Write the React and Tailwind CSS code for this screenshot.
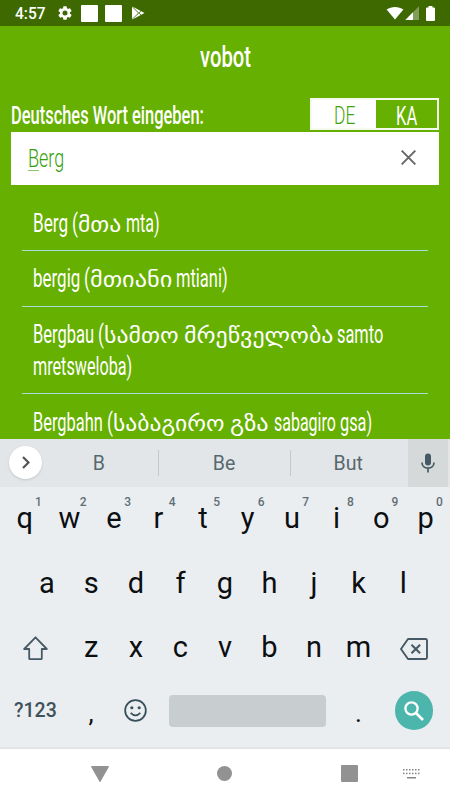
import { useLayoutEffect, useRef, useState } from "react";

const suggestions = [
  {
    height: "h-[56px]",
    lines: [
      [
        { text: "Berg", width: 35 },
        { text: "(", width: 6, gap: 4 },
        { text: "მთა", width: 43, geo: true },
        { text: "mta)", width: 34, gap: 5 },
      ],
    ],
  },
  {
    height: "h-[56px]",
    lines: [
      [
        { text: "bergig", width: 47 },
        { text: "(", width: 6, gap: 4 },
        { text: "მთიანი", width: 82, geo: true },
        { text: "mtiani)", width: 52, gap: 4 },
      ],
    ],
  },
  {
    height: "h-[87px]",
    lines: [
      [
        { text: "Bergbau", width: 61 },
        { text: "(", width: 6, gap: 4 },
        { text: "სამთო", width: 75, geo: true },
        { text: "მრეწველობა", width: 149, gap: 5, geo: true },
        { text: "samto", width: 46, gap: 4 },
      ],
      [{ text: "mretsweloba)", width: 99 }],
    ],
  },
  {
    height: "h-[56px]",
    lines: [
      [
        { text: "Bergbahn", width: 70 },
        { text: "(", width: 6, gap: 4 },
        { text: "საბაგირო", width: 112, geo: true },
        { text: "გზა", width: 39, gap: 5, geo: true },
        { text: "sabagiro", width: 62, gap: 5 },
        { text: "gsa)", width: 32, gap: 4 },
      ],
    ],
  },
];

const topRow = ["q", "w", "e", "r", "t", "y", "u", "i", "o", "p"];
const homeRow = ["a", "s", "d", "f", "g", "h", "j", "k", "l"];
const lowerRow = ["z", "x", "c", "v", "b", "n", "m"];

// Condenses a word horizontally so that it fills the given width
function Fit({ width, gap = 0, className = "", children }) {
  const ref = useRef(null);
  const [scale, setScale] = useState(1);

  useLayoutEffect(() => {
    setScale(width / ref.current.offsetWidth);
  }, [width]);

  return (
    <span className="block shrink-0" style={{ width, marginLeft: gap }}>
      <span
        ref={ref}
        className={"inline-block origin-left whitespace-nowrap " + className}
        style={{ transform: `scaleX(${scale})` }}
      >
        {children}
      </span>
    </span>
  );
}

function StatusBar() {
  return (
    <div className="h-[26px] shrink-0 bg-[#3d6900] flex items-center justify-between pl-[15px] pr-[15px] text-white">
      <div className="flex items-center">
        <Fit width={31} className="text-[16px] leading-[26px] font-medium pt-px">4:57</Fit>
        <svg viewBox="2 2 20 20" className="ml-[12px] w-[14px] h-[14px]" fill="currentColor">
          <path d="M19.14 12.94c.04-.3.06-.61.06-.94 0-.32-.02-.64-.07-.94l2.03-1.58a.49.49 0 0 0 .12-.61l-1.92-3.32a.49.49 0 0 0-.59-.22l-2.39.96c-.5-.38-1.03-.7-1.62-.94l-.36-2.54a.48.48 0 0 0-.48-.41h-3.84c-.24 0-.43.17-.47.41l-.36 2.54c-.59.24-1.13.57-1.62.94l-2.39-.96a.48.48 0 0 0-.59.22L2.74 8.87c-.12.21-.08.47.12.61l2.03 1.58c-.05.3-.09.63-.09.94s.02.64.07.94l-2.03 1.58a.49.49 0 0 0-.12.61l1.92 3.32c.12.22.37.29.59.22l2.39-.96c.5.38 1.03.7 1.62.94l.36 2.54c.05.24.24.41.48.41h3.84c.24 0 .44-.17.47-.41l.36-2.54c.59-.24 1.13-.56 1.62-.94l2.39.96c.22.08.47 0 .59-.22l1.92-3.32a.49.49 0 0 0-.12-.61zM12 15.6A3.6 3.6 0 1 1 12 8.4a3.6 3.6 0 0 1 0 7.2z" />
        </svg>
        <span className="ml-[9px] w-[17px] h-[17px] rounded-[1px] bg-white" />
        <span className="ml-[7px] w-[17px] h-[17px] rounded-[1px] bg-white" />
        <svg viewBox="0 0 14 14" className="ml-[9px] w-[14px] h-[14px]">
          <path d="M1 .6v12.8L7.2 7zM1.4.4 9.8 5 7.8 6.9zM1.4 13.6 9.8 9 7.8 7.1zM10.2 5.2 13.5 7l-3.3 1.8L8.3 7z" fill="#fff" />
          <path d="M1 .6 10.2 9.2M1 13.4l9.2-8.6" stroke="#3d6900" strokeWidth=".5" />
        </svg>
      </div>
      <div className="flex items-center">
        <svg viewBox="0 0 18 14" className="w-[18px] h-[14px]" fill="currentColor">
          <path d="M.6 3.6C5.3 0 12.7 0 17.4 3.6L9 13.6z" />
        </svg>
        <svg viewBox="0 0 14 14" className="ml-[1px] w-[14px] h-[14px]" fill="currentColor">
          <path d="M.3 14 14 .3V14z" opacity=".35" />
          <path d="M.3 14 8 6.3V14z" />
        </svg>
        <svg viewBox="0 0 9 15" className="ml-[7px] w-[9px] h-[15px]" fill="currentColor">
          <path d="M2.5 0h4v1.5H8a1 1 0 0 1 1 1V14a1 1 0 0 1-1 1H1a1 1 0 0 1-1-1V2.5a1 1 0 0 1 1-1h1.5z" />
        </svg>
      </div>
    </div>
  );
}

function SearchPanel() {
  return (
    <div className="px-[11px] text-white">
      <div className="h-[72px] pt-[13px] flex justify-center">
        <Fit width={51} className="text-[29px] leading-[36px] font-medium">vobot</Fit>
      </div>

      <div className="h-[34px] flex justify-between">
        <Fit width={193} className="text-[26.5px] leading-[33px] font-medium">
          Deutsches Wort eingeben:
        </Fit>
        <div className="flex w-[129px] h-[32px] border-2 border-[#f5faef] bg-[#65b000]">
          <div className="w-[64px] bg-white text-[#43a30b] flex justify-center">
            <Fit width={21} className="text-[26.5px] leading-[29px] font-light">DE</Fit>
          </div>
          <div className="flex-1 flex justify-center">
            <Fit width={21} className="text-[26px] leading-[32px]">KA</Fit>
          </div>
        </div>
      </div>

      <div className="h-[53px] bg-white flex items-center justify-between pl-[17px] pr-[23px]">
        <div className="flex text-[26.5px] leading-[50px] font-light text-[#35a00b] pb-[1px]">
          <Fit width={11}>
            <span className="relative">
              B
              <span className="absolute inset-x-0 bottom-[2px] h-px bg-[#8cc86c]" />
            </span>
          </Fit>
          <Fit width={25}>erg</Fit>
        </div>
        <svg viewBox="0 0 14 14" className="w-[15px] h-[15px] mb-[2px]" stroke="#666" strokeWidth="1.8">
          <path d="M.6.6 13.4 13.4M13.4.6.6 13.4" />
        </svg>
      </div>
    </div>
  );
}

function SuggestionList() {
  return (
    <ul className="mx-[22px] mt-[9.5px]">
      {suggestions.map((item, i) => (
        <li
          key={i}
          className={
            "border-b-[1.5px] border-[#a9dcd4] pl-[10.5px] pt-[10px] first:pt-[11px] last:pt-[11px] text-white " +
            item.height
          }
        >
          {item.lines.map((line, n) => (
            <div key={n} className="flex h-[32px]">
              {line.map((word) => (
                <Fit
                  key={word.text}
                  width={word.width}
                  gap={word.gap}
                  className={
                    word.geo
                      ? "font-['DejaVu_Sans',sans-serif] text-[22.5px] leading-[36px]"
                      : "text-[26px] leading-[34px]"
                  }
                >
                  {word.text}
                </Fit>
              ))}
            </div>
          ))}
        </li>
      ))}
    </ul>
  );
}

function Key({ label, hint }) {
  return (
    <div className="relative w-[44.55px] text-center text-[29px] leading-[62px] text-[#0b0f12]">
      {label}
      {hint && (
        <span className="absolute left-[29px] top-[8px] w-[14px] text-[12px] leading-[14px] font-medium text-[#5f6e76]">
          {hint}
        </span>
      )}
    </div>
  );
}

function Keyboard() {
  return (
    <div className="h-[310px] shrink-0 bg-[#ebeef1] border-b-2 border-[#e2e4e6]">
      <div className="h-[48.5px] bg-[#e3e6e8] flex items-center text-[19.5px] text-[#58686f]">
        <div className="ml-[9px] w-[33px] h-[33px] rounded-full bg-white shadow-sm flex items-center justify-center">
          <svg viewBox="0 0 8 13" className="w-[8px] h-[13px]" fill="none" stroke="#555" strokeWidth="2.2">
            <path d="m1 1 5.5 5.5L1 12" />
          </svg>
        </div>
        <div className="w-[115.5px] pt-px pr-[2px] text-center">B</div>
        <div className="w-px h-[26px] bg-[#c3c8cb]" />
        <div className="w-[131px] pt-px text-center">Be</div>
        <div className="w-px h-[26px] bg-[#c3c8cb]" />
        <div className="w-[117.5px] pt-px pr-[2px] text-center">But</div>
        <div className="w-[40px] h-full bg-[#d5d9da] flex items-center justify-center">
          <svg viewBox="0 0 14 20" className="w-[14px] h-[20px]" fill="none" stroke="#455a64">
            <rect x="4" y=".5" width="6" height="12" rx="3" fill="#455a64" stroke="none" />
            <path d="M1 9.5c0 3.5 2.6 5.6 6 5.6s6-2.1 6-5.6M7 15v4.5" strokeWidth="1.7" />
          </svg>
        </div>
      </div>

      <div className="flex h-[64.5px] pl-[2.5px]">
        {topRow.map((k, i) => (
          <Key key={k} label={k} hint={String((i + 1) % 10)} />
        ))}
      </div>
      <div className="flex h-[64.5px] justify-center">
        {homeRow.map((k) => (
          <Key key={k} label={k} />
        ))}
      </div>
      <div className="flex h-[64.5px] pl-[23px]">
        <svg viewBox="0 0 25 24" className="w-[25px] h-[24px] mt-[20px]" fill="none" stroke="#455a64" strokeWidth="1.8" strokeLinejoin="round">
          <path d="M12.5 1.3 1.2 13h5v9.2q0 1 1 1h10.6q1 0 1-1V13h5z" />
        </svg>
        <div className="flex ml-[21px]">
          {lowerRow.map((k) => (
            <Key key={k} label={k} />
          ))}
        </div>
        <svg viewBox="0 0 28 22" className="ml-[19px] mt-[22px] w-[28px] h-[22px]" fill="none" stroke="#455a64" strokeWidth="1.9" strokeLinejoin="round">
          <path d="M8 1h17.5q1.5 0 1.5 1.5v17q0 1.5-1.5 1.5H8L1 11z" />
          <path d="m11.5 6.7 8.6 8.6m0-8.6-8.6 8.6" strokeWidth="2.1" />
        </svg>
      </div>
      <div className="flex h-[60px] items-center pl-[14px]">
        <Fit width={43} className="text-[19.5px] pt-px font-medium text-[#3f525b]">?123</Fit>
        <div className="ml-[24px] w-[20px] pt-[4px] text-center text-[26px] leading-[60px] text-[#0b0f12]">,</div>
        <svg viewBox="0 0 22 22" className="ml-[23px] w-[23px] h-[23px]" fill="none" stroke="#37505b" strokeWidth="1.7">
          <circle cx="11" cy="11" r="9.9" />
          <path d="M6.4 13.3q4.6 4.8 9.2 0" />
          <circle cx="7.5" cy="8.4" r="1.5" fill="#37505b" stroke="none" />
          <circle cx="14.5" cy="8.4" r="1.5" fill="#37505b" stroke="none" />
        </svg>
        <div className="ml-[22px] w-[156.5px] h-[32px] rounded-[4px] bg-[#c8cdcf]" />
        <div className="ml-[23px] w-[20px] pt-[4px] text-center text-[26px] leading-[60px] text-[#0b0f12]">.</div>
        <div className="ml-[26px] w-[38.5px] h-[38.5px] rounded-full bg-[#4db6ac] flex items-center justify-center">
          <svg viewBox="0 0 20 20" className="w-[20px] h-[20px]" fill="none" stroke="#fff" strokeWidth="2.3">
            <circle cx="7.5" cy="7.5" r="6.1" />
            <path d="m12 12 7 7" strokeWidth="2.6" />
          </svg>
        </div>
      </div>
    </div>
  );
}

function NavBar() {
  return (
    <div className="h-[50px] flex items-center pl-[91px] bg-white">
      <svg viewBox="0 0 18 16" className="w-[18px] h-[16px]" fill="#929292">
        <path d="M.8 0h16.4q1 0 .6 1L9.6 15.5q-.6 1-1.2 0L.2 1Q-.2 0 .8 0z" />
      </svg>
      <span className="ml-[108px] w-[15px] h-[15px] rounded-full bg-[#929292]" />
      <span className="ml-[109px] w-[17px] h-[17px] rounded-[1px] bg-[#929292]" />
      <svg viewBox="0 0 17 10" className="ml-[45px] w-[17px] h-[10px]" fill="#858585">
        {[0, 3, 6, 9, 12, 15].map((x) => (
          <g key={x}>
            <rect x={x} y="0" width="1.5" height="1.5" />
            <rect x={x} y="3.7" width="1.5" height="1.5" />
          </g>
        ))}
        <rect x="4" y="8" width="9" height="1.5" />
      </svg>
    </div>
  );
}

function App() {
  return (
    <div className="w-[450px] h-[800px] overflow-hidden flex flex-col bg-white font-['Roboto',sans-serif]">
      <StatusBar />
      <div className="h-[412.5px] shrink-0 overflow-hidden bg-[#65b000]">
        <SearchPanel />
        <SuggestionList />
      </div>
      <Keyboard />
      <NavBar />
    </div>
  );
}

export default App;
